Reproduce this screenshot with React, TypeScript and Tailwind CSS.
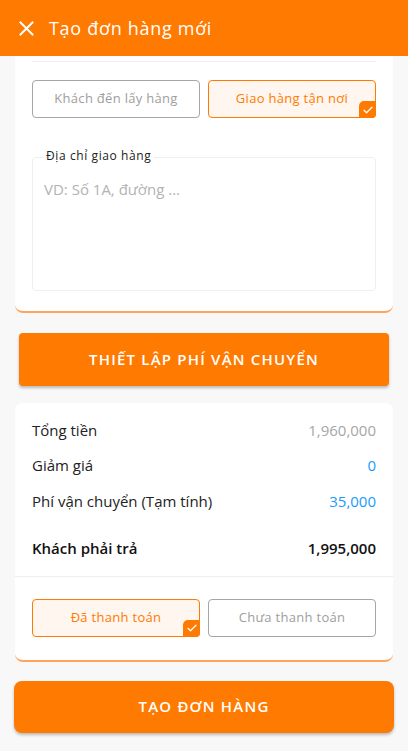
import React from "react";

const Check = () => (
  <span className="absolute -right-px -bottom-px w-[17px] h-[17px] bg-[#FF7A00] rounded-tl-[5px] rounded-br-[4px] flex items-center justify-center">
    <svg width="12" height="12" viewBox="0 0 24 24" fill="none" stroke="white" strokeWidth="2.5" strokeLinecap="round" strokeLinejoin="round">
      <path d="M4 12.5l5 5L20 6.5" />
    </svg>
  </span>
);

const Option = ({ label, active }: { label: string; active?: boolean }) => (
  <div
    className={
      active
        ? "relative flex-1 h-[38px] rounded-[4px] border border-[#FF7A00] bg-[#FFF6F0] text-[#FF7A00] flex items-center justify-center text-[13px] tracking-[0.3px]"
        : "relative flex-1 h-[38px] rounded-[4px] border border-[#A6A6A6] bg-white text-[#9E9E9E] flex items-center justify-center text-[13px] tracking-[0.3px]"
    }
  >
    {label}
    {active && <Check />}
  </div>
);

const Row = ({ label, value, color }: { label: string; value: string; color: string }) => (
  <div className="flex justify-between items-center h-[35.5px] text-[15px]">
    <span className="text-[#222]">{label}</span>
    <span className={color}>{value}</span>
  </div>
);

export default function App() {
  return (
    <div className="w-[408px] h-[751px] bg-[#F8F8F8] overflow-hidden font-['Open_Sans',sans-serif]">
      {/* Header */}
      <div className="h-[56px] bg-[#FF7A00] flex items-center px-[19px] gap-[15px]">
        <svg width="15" height="15" viewBox="0 0 15 15" stroke="white" strokeWidth="2" strokeLinecap="square">
          <path d="M1.5 1.5l12 12M13.5 1.5l-12 12" />
        </svg>
        <span className="text-white text-[18px] tracking-[0.7px]">Tạo đơn hàng mới</span>
      </div>

      <div className="px-[15px]">
        {/* Delivery card */}
        <div className="bg-white rounded-b-[8px] border-b-[2px] border-[#FFA45C] px-[17px] pb-[20px]">
          <div className="h-[6px] border-b border-[#EEEEEE]" />
          <div className="flex gap-[8px] pt-[18px]">
            <Option label="Khách đến lấy hàng" />
            <Option label="Giao hàng tận nơi" active />
          </div>
          <div className="relative mt-[39px] h-[134px] border border-[#EFEFEF] rounded-[4px] px-[11px] pt-[19px]">
            <span className="absolute -top-[10px] left-[10px] bg-white px-[3px] text-[12px] leading-[16px] tracking-[0.6px] text-[#222]">
              Địa chỉ giao hàng
            </span>
            <span className="text-[15px] text-[#B3B3B3]">VD: Số 1A, đường ...</span>
          </div>
        </div>

        {/* Shipping fee button */}
        <div className="mt-[20px] mx-[4px] h-[53px] bg-[#FF7A00] rounded-[4px] shadow-[0_2px_3px_rgba(0,0,0,0.25)] flex items-center justify-center text-white text-[15px] font-semibold tracking-[1.2px]">
          THIẾT LẬP PHÍ VẬN CHUYỂN
        </div>

        {/* Summary card */}
        <div className="mt-[17px] bg-white rounded-[8px] border-b-[2px] border-[#FFA45C]">
          <div className="px-[17px] pt-[9px] pb-[10px]">
            <Row label="Tổng tiền" value="1,960,000" color="text-[#A6A6A6]" />
            <Row label="Giảm giá" value="0" color="text-[#1A9BFC]" />
            <Row label="Phí vận chuyển (Tạm tính)" value="35,000" color="text-[#1A9BFC]" />
            <div className="flex justify-between items-center h-[35px] mt-[12px] text-[15px] font-semibold text-[#111]">
              <span>Khách phải trả</span>
              <span>1,995,000</span>
            </div>
          </div>
          <div className="border-t border-[#EEEEEE] px-[17px] pt-[22px] pb-[23px] flex gap-[8px]">
            <Option label="Đã thanh toán" active />
            <Option label="Chưa thanh toán" />
          </div>
        </div>
      </div>

      {/* Create order */}
      <div className="mt-[19px] mx-[14px] h-[52px] bg-[#FF7A00] rounded-[8px] shadow-[0_2px_3px_rgba(0,0,0,0.25)] flex items-center justify-center text-white text-[15px] font-semibold tracking-[1.2px]">
        TẠO ĐƠN HÀNG
      </div>
    </div>
  );
}
